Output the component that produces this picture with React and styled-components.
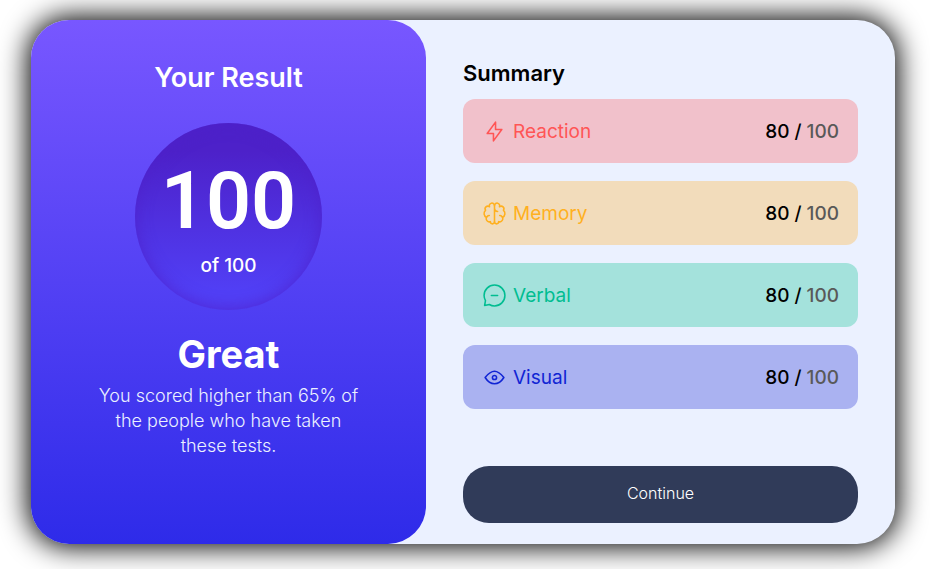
import React from "react";
import styled, { createGlobalStyle } from "styled-components";

const GlobalStyle = createGlobalStyle`
  * { box-sizing: border-box; }
  body { margin: 0; background: #fff; font-family: "Inter", sans-serif; }
  h1, h2, h3, p { margin: 0; }
`;

const Page = styled.main`
  min-height: 100vh;
  padding: 20px 35px 25px 31px;
  display: flex;
`;

const Card = styled.section`
  flex: 1;
  display: grid;
  grid-template-columns: 395fr 469fr;
  border-radius: 38px;
  background: #ebf1ff;
  box-shadow: 0 0 28px 3px #000;
`;

const ResultPanel = styled.section`
  display: flex;
  flex-direction: column;
  align-items: center;
  padding: 40px 60px 0;
  border-radius: 38px;
  color: #fff;
  text-align: center;
  background: linear-gradient(#7857ff, #2e2be9);
`;

const Title = styled.h1`
  font: 600 27px/36px "Inter", sans-serif;
`;

const ScoreCircle = styled.div`
  width: 187px;
  height: 187px;
  margin-top: 27px;
  padding-top: 36px;
  border-radius: 50%;
  background: linear-gradient(#4d21c9 15%, #513ff5 90%);
  box-shadow: inset 0 0 16px rgba(77, 33, 201, 0.8);
`;

const Score = styled.p`
  font: 600 79px/84px "Roboto", sans-serif;
`;

const OutOf = styled.p`
  margin-top: 10px;
  font: 500 19px/25px "Inter", sans-serif;
`;

const Grade = styled.h2`
  margin-top: 20px;
  font: 700 38px/48px "Inter", sans-serif;
`;

const Message = styled.p`
  max-width: 270px;
  margin-top: 5px;
  color: #ebf1ff;
  font: 300 18px/25px "Inter", sans-serif;
`;

const SummaryPanel = styled.section`
  display: flex;
  flex-direction: column;
  padding: 39px 37px 21px;
`;

const SummaryTitle = styled.h2`
  color: #000;
  font: 600 22px/28px "Inter", sans-serif;
`;

const List = styled.ul`
  display: grid;
  gap: 18px;
  margin: 12px 0 0;
  padding: 0;
  list-style: none;
`;

const Row = styled.li`
  display: flex;
  align-items: center;
  gap: 6px;
  height: 64px;
  padding: 0 19px;
  border-radius: 12px;
  color: ${(p) => p.$color};
  background: ${(p) => p.$background};
  font: 400 19px/24px "Inter", sans-serif;
`;

const Icon = styled.svg`
  flex: none;
  width: 25px;
  height: 25px;
  fill: none;
  stroke: currentColor;
  stroke-width: 1.25;
  stroke-linecap: round;
  stroke-linejoin: round;
`;

const Label = styled.span`
  padding-top: 2px;
`;

const Points = styled(Label)`
  margin-left: auto;
  color: #000;
  font-weight: 500;
`;

const Total = styled.span`
  color: #595959;
`;

const Continue = styled.button`
  height: 57px;
  margin-top: auto;
  padding: 0 24px 4px;
  border: 0;
  border-radius: 26px;
  color: #fff;
  background: #303b59;
  font: 300 16px/24px "Inter", sans-serif;
  cursor: pointer;
`;

const categories = [
  {
    name: "Reaction",
    color: "#ff5555",
    background: "#f1c1cb",
    paths: ["M10.833 8.333V2.5l-6.666 9.167h5V17.5l6.666-9.167h-5Z"],
  },
  {
    name: "Memory",
    color: "#ffb01f",
    background: "#f2dcbb",
    paths: [
      "M5.833 11.667a2.5 2.5 0 1 0 .834 4.858",
      "M3.553 13.004a3.333 3.333 0 0 1-.728-5.53m.025-.067a2.083 2.083 0 0 1 2.983-2.824m.199.054A2.083 2.083 0 1 1 10 3.75v12.917a1.667 1.667 0 0 1-3.333 0M10 5.833a2.5 2.5 0 0 0 2.5 2.5m1.667 3.334a2.5 2.5 0 1 1-.834 4.858",
      "M16.447 13.004a3.334 3.334 0 0 0 .728-5.53m-.025-.067a2.083 2.083 0 0 0-2.983-2.824M10 3.75a2.085 2.085 0 0 1 2.538-2.033 2.084 2.084 0 0 1 1.43 2.92m-.635 12.03a1.667 1.667 0 0 1-3.333 0",
    ],
  },
  {
    name: "Verbal",
    color: "#00bd91",
    background: "#a4e2dc",
    paths: [
      "M7.5 10h5M10 18.333A8.333 8.333 0 1 0 1.667 10c0 1.518.406 2.942 1.115 4.167l-.699 3.75 3.75-.699A8.295 8.295 0 0 0 10 18.333Z",
    ],
  },
  {
    name: "Visual",
    color: "#1125d4",
    background: "#aab2f1",
    paths: [
      "M10 11.667a1.667 1.667 0 1 0 0-3.334 1.667 1.667 0 0 0 0 3.334Z",
      "M17.5 10c-1.574 2.492-4.402 5-7.5 5s-5.926-2.508-7.5-5C4.416 7.632 6.66 5 10 5s5.584 2.632 7.5 5Z",
    ],
  },
];

export default function App() {
  return (
    <Page>
      <GlobalStyle />
      <Card>
        <ResultPanel>
          <Title>Your Result</Title>
          <ScoreCircle>
            <Score>100</Score>
            <OutOf>of 100</OutOf>
          </ScoreCircle>
          <Grade>Great</Grade>
          <Message>You scored higher than 65% of the people who have taken these tests.</Message>
        </ResultPanel>
        <SummaryPanel>
          <SummaryTitle>Summary</SummaryTitle>
          <List>
            {categories.map((c) => (
              <Row key={c.name} $color={c.color} $background={c.background}>
                <Icon viewBox="0 0 20 20" aria-hidden="true">
                  {c.paths.map((d) => (
                    <path key={d} d={d} />
                  ))}
                </Icon>
                <Label>{c.name}</Label>
                <Points>
                  80 / <Total>100</Total>
                </Points>
              </Row>
            ))}
          </List>
          <Continue type="button">Continue</Continue>
        </SummaryPanel>
      </Card>
    </Page>
  );
}
